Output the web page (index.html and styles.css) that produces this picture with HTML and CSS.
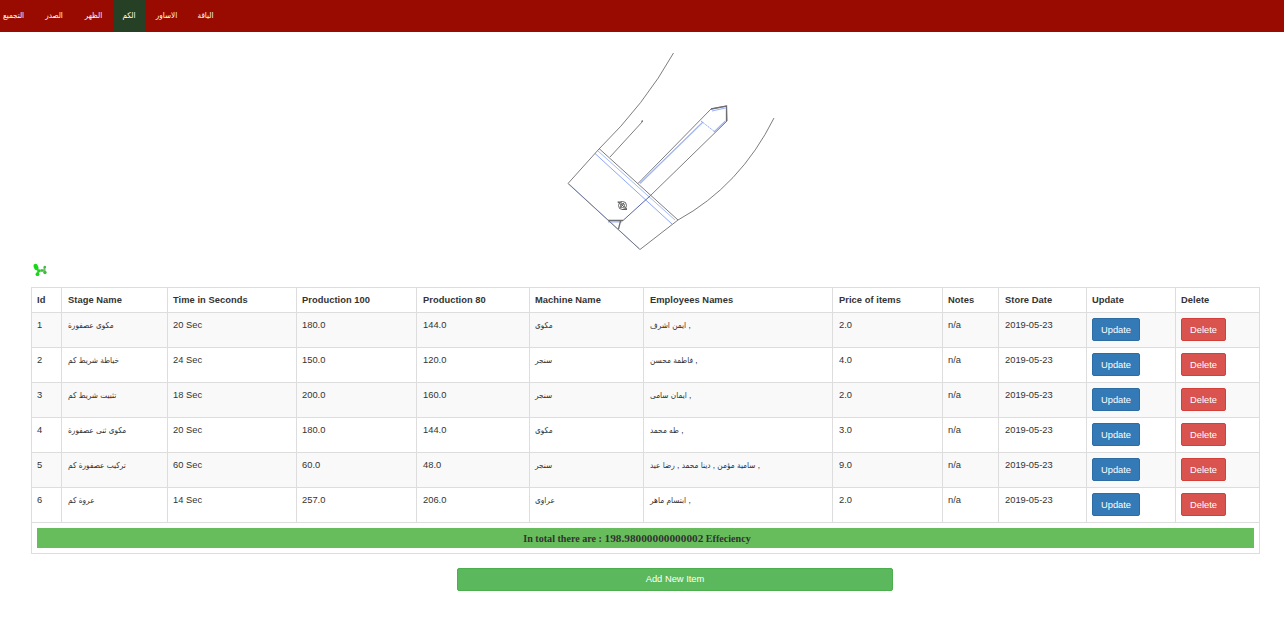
FILE: index.html
```html
<!DOCTYPE html>
<html lang="en">
<head>
<meta charset="utf-8">
<title>الكم</title>
<link rel="stylesheet" href="styles.css">
</head>
<body>
<nav class="nav ar">
  <a class="n1">التجميع</a><a class="n2">الصدر</a><a class="n3">الظهر</a><a class="n4 active">الكم</a><a class="n5">الاساور</a><a class="n6">الياقة</a>
</nav>
<div class="figure">
  <svg width="240" height="220" viewBox="555 40 240 220" fill="none">
    <g stroke="#9db4f7" stroke-width="0.9">
      <path d="M640 183.500L703 122M712 111L725.500 108M725.500 121L714 132" stroke-width="1.2"/>
      <path d="M598 151L675 220"/>
      <path d="M595 153.500L672 224" stroke="#7f9df5"/>
      <path d="M569 184L639 248.500M608 222H622" stroke-width="1"/>
      <path d="M701 121L715 132" stroke="#7f9df5" stroke-dasharray="1.500 .7"/>
    </g>
    <g stroke="#6e6e72" stroke-width="0.9">
      <path d="M673.500 53Q645 104 599 149L568 183.500L640 249.500L678 220Q740 186 774 118"/>
      <path d="M610 157L643 121M641 121.500L643 120.500"/>
      <path d="M599 148.500L678 220"/>
      <path d="M638 183.500L711 109L726.500 106L727 121L650 196" />
      <path d="M711 109L726.500 106V121" stroke-width="1.300"/>
      <path d="M608 220.500H623M620.500 221L618.500 229" stroke-width="1.300"/>
    </g>
    <path d="M650 196L623 220.500" stroke="#5566a4"/>
    <g stroke="#555" stroke-width=".9">
      <circle cx="622.500" cy="205.500" r="4"/><circle cx="622.500" cy="205.500" r="2"/>
      <path d="M618 202L627 209M617.500 202H622M622 209.500H627M624 203L620 208"/>
    </g>
  </svg>
</div>
<div class="tools">
  <svg width="16" height="16" viewBox="0 0 16 16">
    <path d="M3.500 4L6.500 9L5.500 12M6.500 8.500H13M12.500 5V11" stroke="#6fbf6f" stroke-width="2" fill="none"/>
    <g fill="#16d816"><ellipse cx="4" cy="5" rx="2.200" ry="3.200" transform="rotate(-25 4 5)"/><circle cx="5.500" cy="12.200" r="1.900"/><circle cx="7" cy="9" r="1.600"/></g>
    <g fill="#45b945"><circle cx="12.800" cy="5" r="1.300"/><circle cx="13" cy="10.500" r="1.700"/><circle cx="10" cy="8.500" r="1.200"/></g>
  </svg>
</div>
<table class="grid">
  <colgroup><col class="w1"><col class="w2"><col class="w3"><col class="w4"><col class="w5"><col class="w6"><col class="w7"><col class="w8"><col class="w9"><col class="w10"><col class="w11"><col class="w12"></colgroup>
  <thead><tr><th>Id</th><th class="in">Stage Name</th><th>Time in Seconds</th><th>Production 100</th><th class="in">Production 80</th><th>Machine Name</th><th class="in">Employees Names</th><th class="in">Price of items</th><th>Notes</th><th class="in">Store Date</th><th>Update</th><th>Delete</th></tr></thead>
  <tbody>
    <tr><td>1</td><td class="in ar">مكوى عصفورة</td><td>20 Sec</td><td>180.0</td><td class="in">144.0</td><td class="ar">مكوى</td><td class="in ar">ايمن اشرف ,</td><td class="in">2.0</td><td>n/a</td><td class="in">2019-05-23</td><td><button class="btn update">Update</button></td><td><button class="btn delete">Delete</button></td></tr>
    <tr><td>2</td><td class="in ar">خياطة شريط كم</td><td>24 Sec</td><td>150.0</td><td class="in">120.0</td><td class="ar">سنجر</td><td class="in ar">فاطمة محسن ,</td><td class="in">4.0</td><td>n/a</td><td class="in">2019-05-23</td><td><button class="btn update">Update</button></td><td><button class="btn delete">Delete</button></td></tr>
    <tr><td>3</td><td class="in ar">تثبيت شريط كم</td><td>18 Sec</td><td>200.0</td><td class="in">160.0</td><td class="ar">سنجر</td><td class="in ar">ايمان سامى ,</td><td class="in">2.0</td><td>n/a</td><td class="in">2019-05-23</td><td><button class="btn update">Update</button></td><td><button class="btn delete">Delete</button></td></tr>
    <tr><td>4</td><td class="in ar">مكوى ثنى عصفورة</td><td>20 Sec</td><td>180.0</td><td class="in">144.0</td><td class="ar">مكوى</td><td class="in ar">طه محمد ,</td><td class="in">3.0</td><td>n/a</td><td class="in">2019-05-23</td><td><button class="btn update">Update</button></td><td><button class="btn delete">Delete</button></td></tr>
    <tr><td>5</td><td class="in ar">تركيب عصفورة كم</td><td>60 Sec</td><td>60.0</td><td class="in">48.0</td><td class="ar">سنجر</td><td class="in ar">سامية مؤمن , دينا محمد , رضا عيد ,</td><td class="in">9.0</td><td>n/a</td><td class="in">2019-05-23</td><td><button class="btn update">Update</button></td><td><button class="btn delete">Delete</button></td></tr>
    <tr><td>6</td><td class="in ar">عروة كم</td><td>14 Sec</td><td>257.0</td><td class="in">206.0</td><td class="ar">عراوى</td><td class="in ar">ابتسام ماهر ,</td><td class="in">2.0</td><td>n/a</td><td class="in">2019-05-23</td><td><button class="btn update">Update</button></td><td><button class="btn delete">Delete</button></td></tr>
    <tr class="sum"><td colspan="12"><div class="total">In total there are : <span class="num">198.98000000000002</span> Effeciency</div></td></tr>
  </tbody>
</table>
<button class="btn add">Add New Item</button>
</body>
</html>
```
FILE: styles.css
```css
* { box-sizing: border-box; }
body { margin: 0; background: #fff; color: #333; font: 9.33px/13.33px "Liberation Sans", "DejaVu Sans Condensed", sans-serif; }
.ar { font-size: 8.2px; white-space: nowrap; }
.nav { display: flex; height: 32px; background: #990b00; color: #fff; font-size: 8px; line-height: 31px; }
.nav a { text-align: center; white-space: nowrap; }
.n1 { width: 27px; margin-right: 7px; }
.n2 { width: 40px; }
.n3 { width: 39px; }
.n4 { width: 32px; }
.n5 { width: 43px; }
.n6 { width: 35px; }
.nav .active { background: #264026; }
.figure { height: 220px; margin-top: 8px; display: flex; padding-left: 555px; }
.figure svg, .tools svg { display: block; }
.tools { height: 27px; padding: 2px 0 0 32px; }
.grid { width: 1229px; margin-left: 31px; table-layout: fixed; border-collapse: collapse; }
.w1 { width: 30px; } .w2 { width: 106px; } .w3 { width: 129px; } .w4 { width: 120px; }
.w5 { width: 113px; } .w6 { width: 114px; } .w7 { width: 189px; } .w8 { width: 110px; }
.w9 { width: 56px; } .w10 { width: 88px; } .w11 { width: 89px; } .w12 { width: 84px; }
th, td { height: 35px; border: 1px solid #ddd; padding: 6px 5px 0; text-align: left; vertical-align: top; }
th { height: 25px; letter-spacing: .05px; white-space: nowrap; }
.in { padding-left: 6px; }
td .btn { margin-top: -1px; }
tbody tr:nth-child(odd) { background: #f9f9f9; }
tbody tr.sum:nth-child(odd) { background: #fff; }
.sum td { height: 31px; padding: 5px; }
.total { height: 20px; padding-right: 17px; background: #67bd5b; text-align: center; font: bold 10.1px/21px "Liberation Serif", serif; }
.num { font-size: 11.3px; }
.btn { display: block; height: 23px; padding: 0; border: 1px solid; border-radius: 2px; color: #fff; font: 9.33px/21px "Liberation Sans", sans-serif; text-align: center; }
.update { width: 48px; padding-top: 1px; background: #337ab7; border-color: #2e6da4; }
.delete { width: 45px; padding-top: 1px; background: #d9534f; border-color: #d43f3a; }
.add { width: 436px; margin: 14px 0 0 457px; background: #5cb85c; border-color: #4cae4c; }
```
